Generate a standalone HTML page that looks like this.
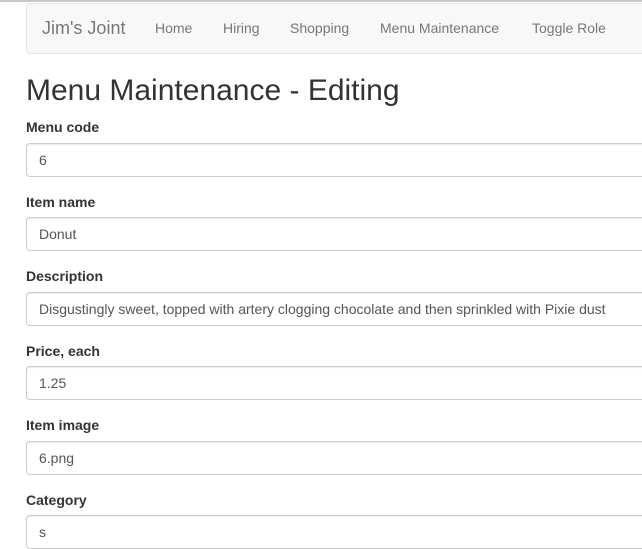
<!DOCTYPE html>
<html><head><style>
body{margin:0;width:642px;height:543px;overflow:hidden;background:#fff;font-family:"Liberation Sans",sans-serif;color:#333;position:relative}
.top{position:absolute;left:0;top:0;width:642px;height:2px;background:#c8c8c8}
.nav{position:absolute;left:26px;top:3px;width:640px;height:49px;background:#f8f8f8;border:1px solid #e7e7e7;border-radius:4px}
.nav span{position:absolute;top:0;line-height:49px;font-size:14px;color:#777}
.nav .b{font-size:18px;left:15px}
h2{position:absolute;left:26px;top:71px;margin:0;font-size:30px;font-weight:400;line-height:40px}
label{position:absolute;left:26px;font-size:14px;font-weight:bold;line-height:20px}
.in{position:absolute;left:26px;width:640px;height:32px;border:1px solid #ccc;border-radius:4px;box-shadow:inset 0 1px 1px rgba(0,0,0,.075);font-size:14px;color:#555;line-height:32px;padding-left:12px;box-sizing:content-box}
</style></head><body>
<div class="top"></div>
<div class="nav">
<span class="b">Jim's Joint</span>
<span style="left:128px">Home</span>
<span style="left:196px">Hiring</span>
<span style="left:263px">Shopping</span>
<span style="left:353px">Menu Maintenance</span>
<span style="left:505px">Toggle Role</span>
</div>
<h2>Menu Maintenance - Editing</h2>
<label style="top:117px">Menu code</label><div class="in" style="top:143px">6</div>
<label style="top:192px">Item name</label><div class="in" style="top:217px">Donut</div>
<label style="top:266px">Description</label><div class="in" style="top:292px">Disgustingly sweet, topped with artery clogging chocolate and then sprinkled with Pixie dust</div>
<label style="top:341px">Price, each</label><div class="in" style="top:366px">1.25</div>
<label style="top:415px">Item image</label><div class="in" style="top:441px">6.png</div>
<label style="top:490px">Category</label><div class="in" style="top:515px">s</div>
</body></html>
